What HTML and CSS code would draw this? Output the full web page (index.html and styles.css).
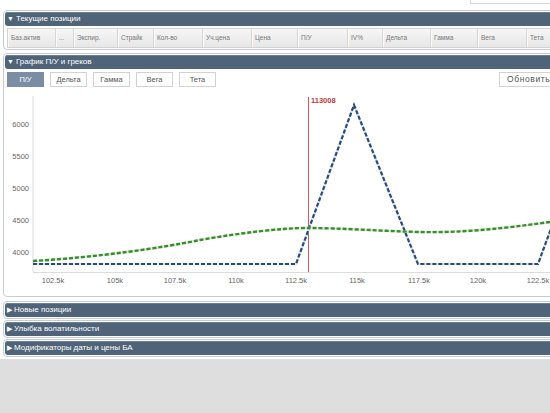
FILE: index.html
```html
<!DOCTYPE html>
<html lang="ru">
<head>
<meta charset="utf-8">
<title>Позиции</title>
<link rel="stylesheet" href="styles.css">
</head>
<body>
<div class="page">
  <div class="topbar"><div class="field"></div></div>

  <section class="panel">
    <div class="panel-head"><span class="arrow">▼</span>Текущие позиции</div>
    <div class="table-head">
      <div class="th">Баз.актив</div>
      <div class="th">...</div>
      <div class="th">Экспир.</div>
      <div class="th">Страйк</div>
      <div class="th">Кол-во</div>
      <div class="th">Уч.цена</div>
      <div class="th">Цена</div>
      <div class="th">П/У</div>
      <div class="th">IV%</div>
      <div class="th">Дельта</div>
      <div class="th">Гамма</div>
      <div class="th">Вега</div>
      <div class="th">Тета</div>
    </div>
  </section>

  <section class="panel panel-chart">
    <div class="panel-head"><span class="arrow">▼</span>График П/У и греков</div>
    <div class="toolbar">
      <button class="tab tab-active">П/У</button>
      <button class="tab">Дельта</button>
      <button class="tab">Гамма</button>
      <button class="tab">Вега</button>
      <button class="tab">Тета</button>
      <button class="tab refresh">Обновить</button>
    </div>
    <svg class="chart" width="593" height="200" viewBox="5 90 593 200">
      <line x1="33" y1="96" x2="33" y2="272" stroke="#dcdcdc" stroke-width="1"/>
      <line x1="33" y1="272.5" x2="600" y2="272.5" stroke="#dcdcdc" stroke-width="1"/>
      <g class="ylab" text-anchor="end">
        <text x="29" y="127">6000</text>
        <text x="29" y="159">5500</text>
        <text x="29" y="191">5000</text>
        <text x="29" y="223">4500</text>
        <text x="29" y="255">4000</text>
      </g>
      <g class="xlab" text-anchor="middle">
        <text x="53" y="283">102.5k</text>
        <text x="115" y="283">105k</text>
        <text x="175" y="283">107.5k</text>
        <text x="236" y="283">110k</text>
        <text x="296" y="283">112.5k</text>
        <text x="357" y="283">115k</text>
        <text x="419" y="283">117.5k</text>
        <text x="478" y="283">120k</text>
        <text x="538" y="283">122.5k</text>
      </g>
      <line x1="308.5" y1="97" x2="308.5" y2="272" stroke="#d05a5a" stroke-width="1"/>
      <text class="mark" x="311" y="103">113008</text>
      <path d="M33,264 L296,264 L354,105 L418,264 L538,264 L556,215" fill="none" stroke="#d8e2ee" stroke-width="2.2"/>
      <path d="M33,264 L296,264 L354,105 L418,264 L538,264 L556,215" fill="none" stroke="#2a4c78" stroke-width="2.2" stroke-dasharray="4 2"/>
      <path d="M33,261 C100,257 160,248 200,240 C240,233 280,228 308,228 C340,228 380,231 420,232 C460,233 500,229 550,222 L600,214" fill="none" stroke="#d9ecd5" stroke-width="2.4"/>
      <path d="M33,261 C100,257 160,248 200,240 C240,233 280,228 308,228 C340,228 380,231 420,232 C460,233 500,229 550,222 L600,214" fill="none" stroke="#3a8c2c" stroke-width="2.4" stroke-dasharray="4 2"/>
    </svg>
  </section>

  <section class="panel panel-closed">
    <div class="panel-head"><span class="arrow">▶</span>Новые позиции</div>
  </section>
  <section class="panel panel-closed">
    <div class="panel-head"><span class="arrow">▶</span>Улыбка волатильности</div>
  </section>
  <section class="panel panel-closed">
    <div class="panel-head"><span class="arrow">▶</span>Модификаторы даты и цены БА</div>
  </section>
</div>
</body>
</html>
```

FILE: styles.css
```css
html, body {
  margin: 0;
  padding: 0;
}
body {
  background: #dedede;
  overflow: hidden;
  font-family: "Liberation Sans", Arial, sans-serif;
  color: #555;
}
.page {
  width: 600px;
  background: #fff;
  padding: 0 0 1px 3px;
}
.topbar {
  height: 10px;
}
.field {
  margin-left: 467px;
  width: 140px;
  height: 3px;
  border: 1px solid #d6d6d6;
  border-top: none;
  background: #fff;
}
.panel {
  border: 1px solid #c5cbd2;
  border-radius: 4px;
  background: #fff;
  padding: 1px;
  margin-bottom: 3px;
}
.panel-head {
  height: 14px;
  line-height: 14px;
  background: #4f6479;
  border-radius: 3px;
  color: #fff;
  font-size: 8px;
  padding-left: 2px;
  box-shadow: inset 0 1px 0 #6c8093;
}
.arrow {
  font-size: 7px;
  margin-right: 2px;
}
.table-head {
  margin: 2px 0 0 2px;
  height: 18px;
  display: grid;
  grid-template-columns: 48px 18px 44px 36px 49px 49px 46px 50px 35px 48px 47px 49px 1fr;
  border: 1px solid #d3d3d3;
  background: linear-gradient(#f6f6f6, #e7e7e7);
}
.th {
  font-size: 6.5px;
  line-height: 18px;
  color: #777;
  padding-left: 3px;
  border-right: 1px solid #d6d6d6;
  box-shadow: inset 1px 0 0 #fafafa;
  white-space: nowrap;
  overflow: hidden;
}
.panel-chart {
  margin-top: 3px;
  margin-bottom: 4px;
}
.toolbar {
  display: flex;
  margin: 3px 0 0 2px;
  height: 15px;
}
.tab {
  height: 15px;
  width: 37px;
  margin-right: 6px;
  padding: 0;
  border: 1px solid #d2d2d2;
  background: #fff;
  color: #555;
  font-family: "Liberation Sans", Arial, sans-serif;
  font-size: 7.5px;
  line-height: 13px;
}
.tab-active {
  background: #7a8da2;
  border-color: #7a8da2;
  color: #fff;
}
.refresh {
  margin-left: 277px;
  width: 70px;
  text-align: left;
  padding-left: 7px;
  font-size: 8.5px;
  letter-spacing: 0.6px;
  white-space: nowrap;
}
.chart {
  display: block;
  margin-top: 3px;
  margin-bottom: 5px;
}
.ylab text, .xlab text {
  font-family: "Liberation Sans", Arial, sans-serif;
  font-size: 7.5px;
  fill: #666;
}
.mark {
  font-family: "Liberation Sans", Arial, sans-serif;
  font-size: 7.5px;
  font-weight: bold;
  fill: #b83a3a;
}
.panel-closed {
  margin-bottom: 1px;
}
```
